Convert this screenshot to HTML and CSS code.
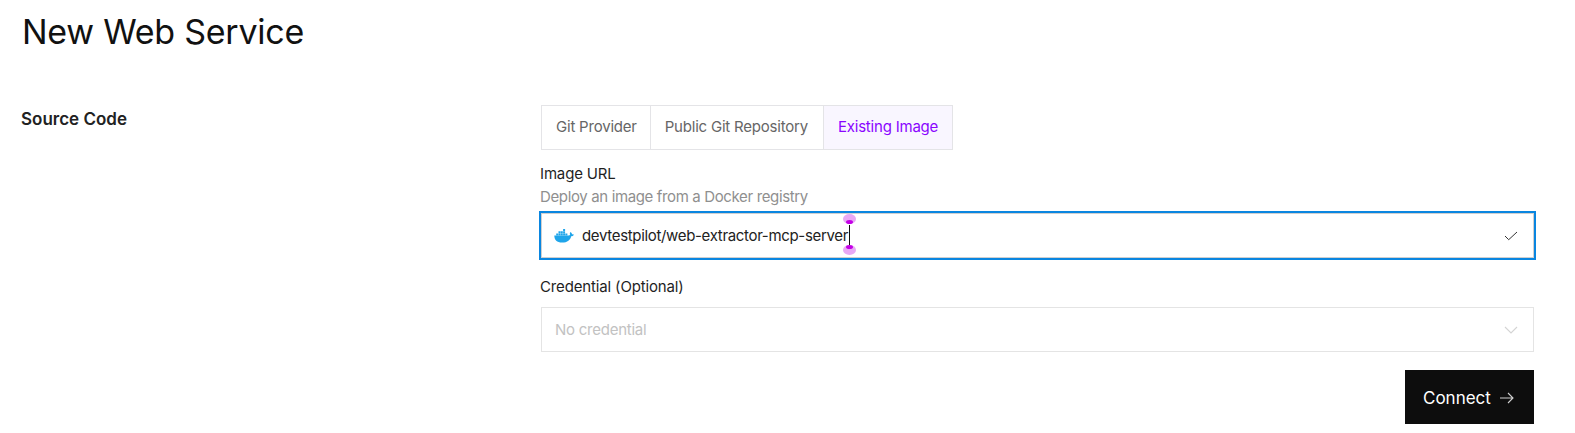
FILE: index.html
```html
<!DOCTYPE html>
<html lang="en">
<head>
<meta charset="utf-8">
<title>New Web Service</title>
<link rel="stylesheet" href="styles.css">
</head>
<body>
<h1 class="title">New Web Service</h1>
<section class="row">
  <h2 class="row-label">Source Code</h2>
  <div class="row-body">
    <div class="tabs">
      <button class="tab tab-first">Git Provider</button>
      <button class="tab tab-second">Public Git Repository</button>
      <button class="tab tab-active">Existing Image</button>
    </div>
    <div class="label">Image URL</div>
    <div class="hint">Deploy an image from a Docker registry</div>
    <div class="input">
      <svg class="docker" width="20" height="14" viewBox="0 0 20 14">
        <path fill="#1fa5ea" d="M0.3 6.6h14.2c.6 0 1.3-.2 1.7-.5-.4-.7-.5-1.9 0-2.6l.4-.5.5.4c.7.6 1 1.3 1 2 .6-.1 1.3 0 1.7.3-.5 1.1-1.500 1.500-2.600 1.500C16.500 10.600 13.500 13.600 8 13.600 3 13.600.3 11 .3 6.600z"/>
        <path fill="#1fa5ea" d="M2.200 4.400h2v2H2.200zM4.500 4.400h2v2H4.500zM6.800 4.400h2v2H6.800zM9.100 4.400h2v2H9.100zM11.400 4.400h2v2h-2zM4.500 2.200h2v2H4.500zM6.800 2.200h2v2H6.800zM9.100 2.200h2v2H9.100zM9.100 0h2v2H9.100z"/>
      </svg>
      <span class="value">devtestpilot/web-extractor-mcp-server</span>
      <span class="caret">
        <i class="handle handle-top"></i>
        <i class="handle handle-bottom"></i>
      </span>
      <svg class="check" width="14" height="10" viewBox="0 0 14 10"><path d="M1 5l3.700 3.700L13 1" fill="none" stroke="#333" stroke-width="1"/></svg>
    </div>
    <div class="label label-credential">Credential (Optional)</div>
    <div class="select">
      <span class="select-text">No credential</span>
      <svg width="14" height="8" viewBox="0 0 14 8"><path d="M1 1l6 6 6-6" fill="none" stroke="#d4d4d4" stroke-width="1.100"/></svg>
    </div>
    <div class="actions">
      <button class="connect"><span>Connect</span>
        <svg width="14" height="12" viewBox="0 0 14 12"><path d="M0 6h13M8 1l5 5-5 5" fill="none" stroke="#d0d0d0" stroke-width="1.100"/></svg>
      </button>
    </div>
  </div>
</section>
</body>
</html>
```
FILE: styles.css
```css
* { box-sizing: border-box; }
html, body { margin: 0; background: #fff; }
body {
  height: 433px;
  overflow: hidden;
  padding: 0 41px 0 22px;
  font-family: Inter, "Liberation Sans", sans-serif;
  color: #1a1a1a;
  font-size: 15px;
  letter-spacing: -0.15px;
}
.title {
  margin: 10px 0 0;
  font-size: 34px;
  line-height: 44px;
  font-weight: 400;
  color: #111;
  letter-spacing: -0.25px;
}
.row {
  display: grid;
  grid-template-columns: 519px 1fr;
  margin-top: 51px;
}
.row-label {
  margin: 2px 0 0 -1px;
  font-size: 17px;
  line-height: 24px;
  font-weight: 600;
  letter-spacing: 0;
  color: #222;
}
.tabs { display: flex; width: max-content; height: 45px; border: 1px solid #e4e4e7; }
.tab {
  font: inherit;
  letter-spacing: -0.21px;
  color: #666;
  background: #fff;
  border: 0;
  border-right: 1px solid #e4e4e7;
  padding: 0 14px 2px;
  height: 100%;
}
.tab-first { padding-right: 13px; }
.tab-second { padding-right: 15px; }
.tab:last-child { border-right: 0; }
.tab-active { background: #f9f6ff; color: #8a05ff; }
.label { margin-top: 14px; line-height: 20px; color: #1f1f1f; margin-left: -1px; }
.hint { margin: 3px 0 0 -1px; line-height: 20px; color: #8f8f8f; letter-spacing: -0.36px; }
.input {
  display: flex;
  align-items: center;
  margin: 4px -2px 0 -2px;
  height: 49px;
  padding: 0 16px 0 13px;
  border: 2px solid #0a86e0;
  box-shadow: inset 0 0 0 1px #cfcfcf;
}
.docker { flex: none; margin-right: 8px; }
.value { color: #222; letter-spacing: -0.33px; }
.caret {
  position: relative;
  width: 1px;
  height: 21px;
  margin-left: 1px;
  background: #111;
}
.handle {
  position: absolute;
  left: -6px;
  width: 13px;
  height: 10px;
  border-radius: 50%;
  background: #e8a8f5;
}
.handle::after {
  content: "";
  position: absolute;
  left: 3px;
  width: 7px;
  height: 4px;
  border-radius: 50%;
  background: #c400e6;
}
.handle-top { top: -11px; }
.handle-top::after { bottom: 0; }
.handle-bottom { bottom: -9px; }
.handle-bottom::after { top: 0; }
.check { margin-left: auto; }
.label-credential { margin-top: 17px; }
.select {
  display: flex;
  align-items: center;
  justify-content: space-between;
  margin-top: 10px;
  height: 45px;
  padding: 0 15px 0 13px;
  border: 1px solid #e4e4e4;
  color: #c2c2c2;
}
.select-text { letter-spacing: -0.25px; }
.actions { display: flex; justify-content: flex-end; margin-top: 18px; }
.connect {
  display: flex;
  align-items: center;
  gap: 9px;
  width: 129px;
  height: 54px;
  padding: 1px 0 0 18px;
  border: 0;
  background: #0d0d0d;
  color: #fff;
  font: inherit;
  font-size: 17px;
  letter-spacing: 0;
}
```
